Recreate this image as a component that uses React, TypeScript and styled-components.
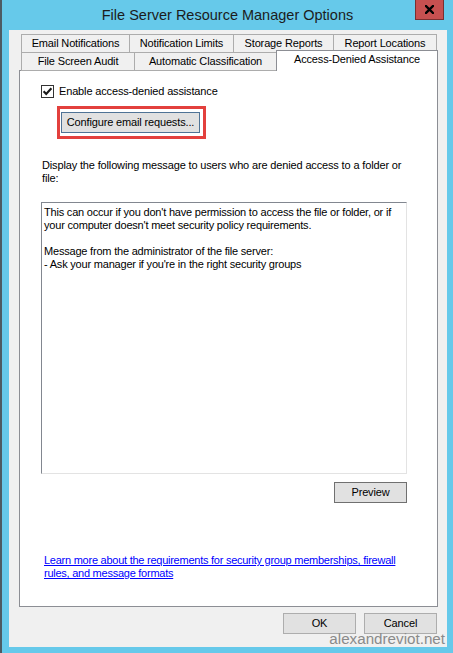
import React from "react";
import styled, { createGlobalStyle } from "styled-components";

const GlobalStyle = createGlobalStyle`
  html, body { margin: 0; padding: 0; }
  body {
    width: 453px;
    height: 653px;
    overflow: hidden;
    background: #66c9ea;
    font-family: "Liberation Sans", Arial, sans-serif;
  }
  * { box-sizing: border-box; }
`;

const Window = styled.div`
  position: relative;
  width: 453px;
  height: 653px;
  background: #66c9ea;
  border-left: 2px solid #4d5b63;
  display: flex;
  flex-direction: column;
`;

const TitleBar = styled.div`
  position: relative;
  height: 30px;
  flex: none;
  display: flex;
  align-items: center;
  justify-content: center;
  font-size: 14.5px;
  color: #1c1c1c;
`;

const CloseButton = styled.div`
  position: absolute;
  top: 0;
  right: 9px;
  width: 29px;
  height: 20px;
  background: #c75050;
  border: 1px solid #7a3030;
  border-top: none;
  display: flex;
  align-items: center;
  justify-content: center;
`;

const Client = styled.div`
  flex: 1;
  margin: 0 6px 6px 7px;
  background: #f0f0f0;
  padding: 4px 9px 0 10px;
  display: flex;
  flex-direction: column;
  font-size: 11px;
  color: #000;
`;

const TabStrip = styled.div`
  padding-left: 2px;
  display: flex;
  flex-direction: column;
`;

const TabRow = styled.div<{ $second?: boolean }>`
  display: flex;
  align-items: flex-end;
  height: 19px;
  margin-top: ${(p) => (p.$second ? "-1px" : "0")};
  position: relative;
  z-index: 2;
`;

const Tab = styled.div<{ $w: number; $first?: boolean; $selected?: boolean }>`
  flex: none;
  width: ${(p) => p.$w}px;
  height: ${(p) => (p.$selected ? 21 : 19)}px;
  margin-left: ${(p) => (p.$first ? 0 : -1)}px;
  border: 1px solid ${(p) => (p.$selected ? "#8c8e94" : "#acacac")};
  border-bottom: ${(p) => (p.$selected ? "none" : "1px solid #acacac")};
  background: ${(p) => (p.$selected ? "#ffffff" : "#f0f0f0")};
  position: relative;
  z-index: ${(p) => (p.$selected ? 2 : 1)};
  text-align: center;
  line-height: 17px;
  white-space: nowrap;
  letter-spacing: -0.15px;
`;

const Panel = styled.div`
  position: relative;
  z-index: 1;
  margin-top: -1px;
  height: 537px;
  flex: none;
  border: 1px solid #8c8e94;
  background: #ffffff;
  display: flex;
  flex-direction: column;
  padding: 14px 30px 0 21px;
`;

const CheckRow = styled.label`
  display: flex;
  align-items: center;
  gap: 5px;
  height: 13px;
  line-height: 13px;
  letter-spacing: -0.15px;
`;

const CheckBox = styled.span`
  width: 13px;
  height: 13px;
  flex: none;
  border: 1px solid #333333;
  background: #ffffff;
  display: flex;
  align-items: center;
  justify-content: center;
`;

const Highlight = styled.div`
  align-self: flex-start;
  margin-left: 16px;
  margin-top: 8px;
  border: 3px solid #e3403d;
  padding: 3px 3px 3px 1px;
  display: flex;
`;

const Button = styled.div<{ $w: number; $tone?: "default" | "dark" | "light" }>`
  flex: none;
  width: ${(p) => p.$w}px;
  height: 21px;
  border: 1px solid
    ${(p) =>
      p.$tone === "default" ? "#4f7396" : p.$tone === "dark" ? "#707070" : "#adadad"};
  background: #e1e1e1;
  text-align: center;
  line-height: 19px;
  font-size: 11px;
  letter-spacing: -0.15px;
  white-space: nowrap;
`;

const Description = styled.div`
  margin-top: 20px;
  margin-left: 1px;
  line-height: 13px;
  white-space: nowrap;
  letter-spacing: -0.15px;
`;

const MessageBox = styled.div`
  margin-top: 17px;
  height: 272px;
  flex: none;
  border-style: solid;
  border-width: 1px;
  border-color: #828790 #e3e3e3 #e3e3e3 #828790;
  padding: 3px 2px;
  line-height: 13px;
  white-space: nowrap;
  letter-spacing: -0.2px;
`;

const PreviewRow = styled.div`
  margin-top: 8px;
  display: flex;
  justify-content: flex-end;
`;

const HelpLink = styled.a`
  margin-top: 51px;
  margin-left: 3px;
  color: #0000ff;
  text-decoration: underline;
  line-height: 13px;
  white-space: nowrap;
  letter-spacing: -0.25px;
  cursor: pointer;
`;

const Footer = styled.div`
  margin-top: 6px;
  padding-right: 1px;
  display: flex;
  justify-content: flex-end;
  gap: 8px;
`;

const Watermark = styled.div`
  position: absolute;
  right: 8px;
  bottom: 7px;
  font-size: 15.2px;
  line-height: 15px;
  color: #8a8a8a;
  white-space: nowrap;
`;

const rowOne = [
  { label: "Email Notifications", w: 109 },
  { label: "Notification Limits", w: 105 },
  { label: "Storage Reports", w: 101 },
  { label: "Report Locations", w: 104 },
];

const rowTwo = [
  { label: "File Screen Audit", w: 114 },
  { label: "Automatic Classification", w: 143 },
  { label: "Access-Denied Assistance", w: 162, selected: true },
];

export default function App() {
  return (
    <>
      <GlobalStyle />
      <Window>
        <TitleBar>
          File Server Resource Manager Options
          <CloseButton>
            <svg width="9" height="9" viewBox="0 0 9 9">
              <path d="M1 1 L8 8 M8 1 L1 8" stroke="#000" strokeWidth="2.4" strokeLinecap="square" />
            </svg>
          </CloseButton>
        </TitleBar>
        <Client>
          <TabStrip>
            <TabRow>
              {rowOne.map((t, i) => (
                <Tab key={t.label} $w={t.w} $first={i === 0}>
                  {t.label}
                </Tab>
              ))}
            </TabRow>
            <TabRow $second>
              {rowTwo.map((t, i) => (
                <Tab key={t.label} $w={t.w} $first={i === 0} $selected={t.selected}>
                  {t.label}
                </Tab>
              ))}
            </TabRow>
          </TabStrip>
          <Panel>
            <CheckRow>
              <CheckBox>
                <svg width="11" height="11" viewBox="0 0 11 11">
                  <path d="M1.6 5.2 L4.2 8 L9.4 2.2" fill="none" stroke="#1a1a1a" strokeWidth="2.1" />
                </svg>
              </CheckBox>
              Enable access-denied assistance
            </CheckRow>
            <Highlight>
              <Button $w={139} $tone="default">Configure email requests...</Button>
            </Highlight>
            <Description>
              Display the following message to users who are denied access to a folder or
              <br />
              file:
            </Description>
            <MessageBox>
              This can occur if you don't have permission to access the file or folder, or if
              <br />
              your computer doesn't meet security policy requirements.
              <br />
              <br />
              Message from the administrator of the file server:
              <br />
              - Ask your manager if you're in the right security groups
            </MessageBox>
            <PreviewRow>
              <Button $w={73} $tone="dark">Preview</Button>
            </PreviewRow>
            <HelpLink>
              Learn more about the requirements for security group memberships, firewall
              <br />
              rules, and message formats
            </HelpLink>
          </Panel>
          <Footer>
            <Button $w={73} $tone="light">OK</Button>
            <Button $w={73} $tone="light">Cancel</Button>
          </Footer>
        </Client>
        <Watermark>alexandreviot.net</Watermark>
      </Window>
    </>
  );
}
